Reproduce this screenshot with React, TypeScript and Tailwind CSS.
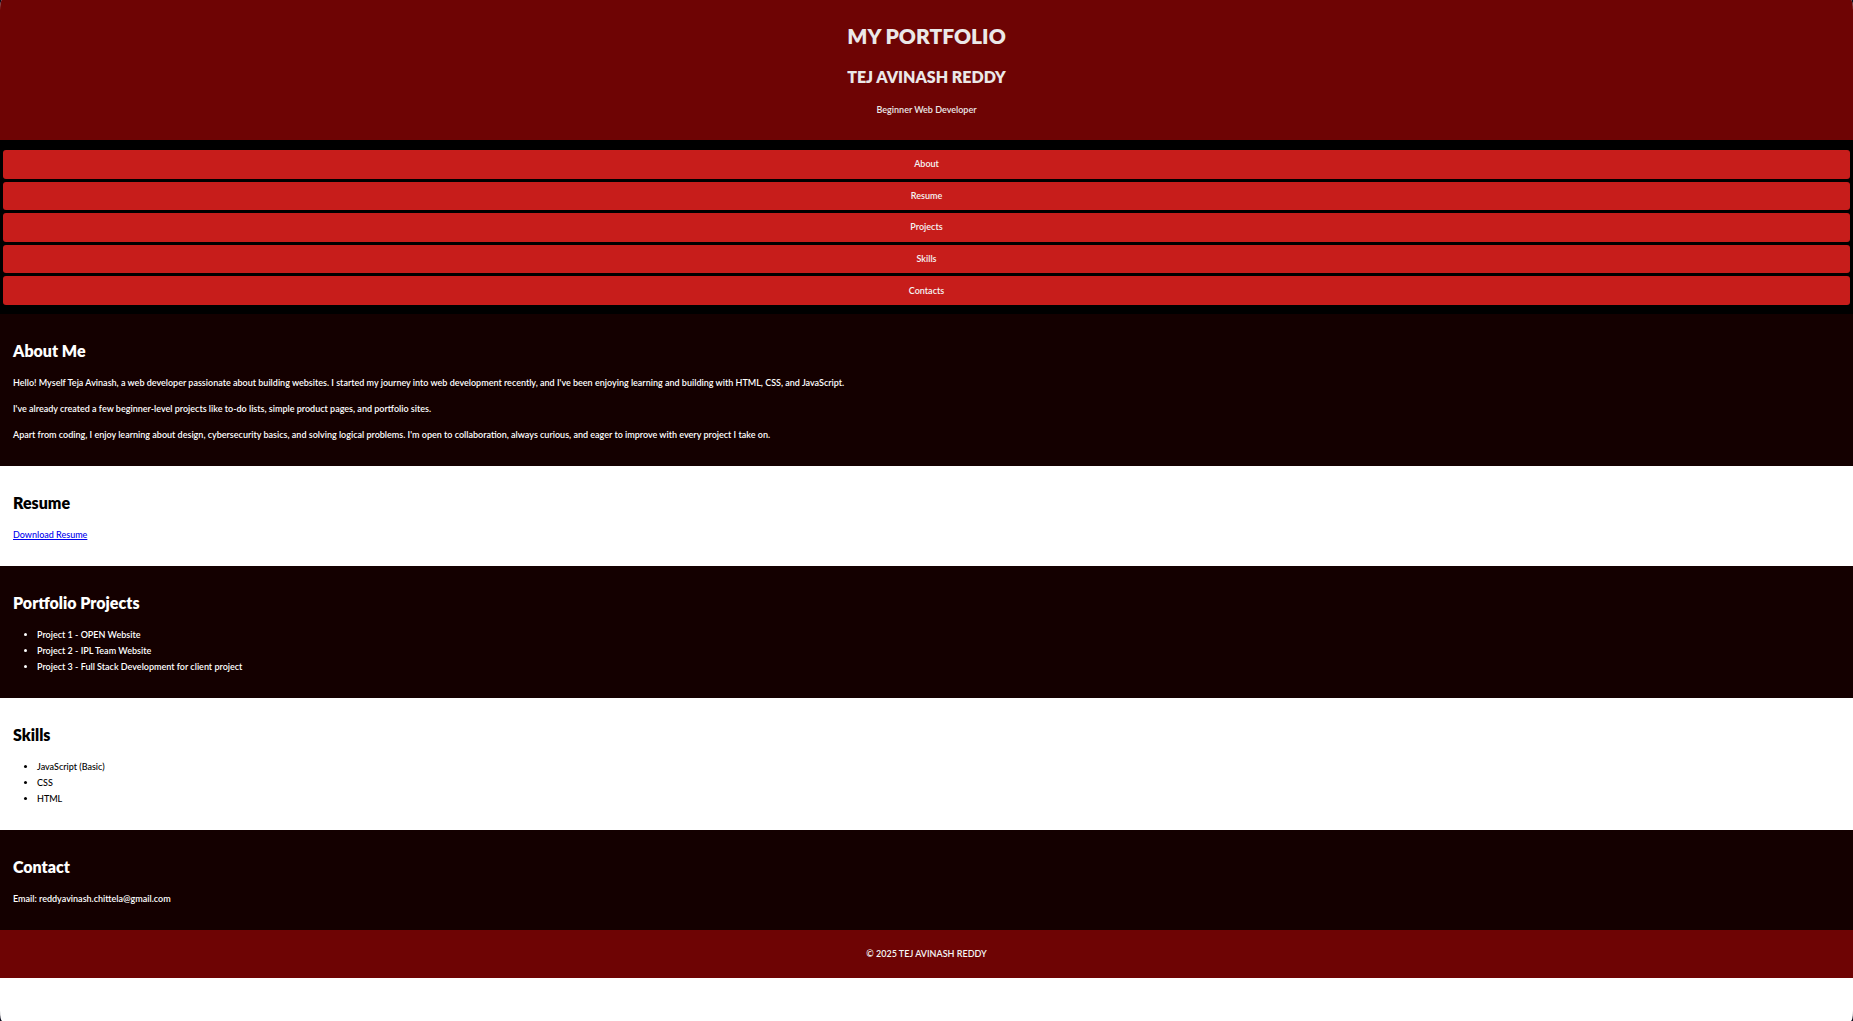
import type { ReactNode } from "react";

const links = [
  ["About", "#about"],
  ["Resume", "#resume"],
  ["Projects", "#projects"],
  ["Skills", "#skills"],
  ["Contacts", "#contact"],
];

function Section({ id, title, dark, children }: { id: string; title: string; dark?: boolean; children: ReactNode }) {
  return (
    <section
      id={id}
      className={
        dark
          ? "bg-[#140000] px-[13px] pt-[25px] pb-[13px] font-semibold text-white"
          : "bg-white px-[13px] pt-[25px] pb-[13px] font-medium text-black"
      }
    >
      <h2 className="mb-3 text-[16px] leading-6 font-extrabold">{title}</h2>
      {children}
    </section>
  );
}

function List({ items }: { items: string[] }) {
  return (
    <ul className="mb-[10px] list-disc pl-6">
      {items.map((item) => (
        <li key={item}>{item}</li>
      ))}
    </ul>
  );
}

export default function App() {
  return (
    <div className="min-h-screen bg-[#0b0b1c]">
      <div className="min-h-screen overflow-hidden rounded-[2px/10px] bg-white font-['Gill_Sans','Gill_Sans_MT',Lato,sans-serif] text-[9px] leading-4">
        <header className="bg-[#6e0404] px-3 pt-5 pb-[22px] text-center font-semibold text-[#ebe8e8]">
          <h1 className="mb-[13px] text-[21px] leading-8 font-extrabold">MY PORTFOLIO</h1>
          <h2 className="mb-[13px] text-[16px] leading-6 font-extrabold">TEJ AVINASH REDDY</h2>
          <p>Beginner Web Developer</p>
        </header>

        <nav className="bg-black px-[3px] pt-[10px] pb-[9px] font-semibold">
          <ul className="grid min-h-[155px] auto-rows-fr gap-[3px]">
            {links.map(([label, href]) => (
              <li key={label} className="flex">
                <a
                  href={href}
                  className="flex flex-1 items-center justify-center rounded-[3px] bg-[#c71d1b] text-[#f5f5f5]"
                >
                  {label}
                </a>
              </li>
            ))}
          </ul>
        </nav>

        <main>
          <Section id="about" title="About Me" dark>
            <p className="mb-[10px]">
              Hello! Myself Teja Avinash, a web developer passionate about building websites. I started my journey into
              web development recently, and I've been enjoying learning and building with HTML, CSS, and JavaScript.
            </p>
            <p className="mb-[10px]">
              I've already created a few beginner-level projects like to-do lists, simple product pages, and portfolio
              sites.
            </p>
            <p className="mb-[10px]">
              Apart from coding, I enjoy learning about design, cybersecurity basics, and solving logical problems. I'm
              open to collaboration, always curious, and eager to improve with every project I take on.
            </p>
          </Section>
          <Section id="resume" title="Resume">
            <p className="mb-[10px]">
              <a href="#resume" className="text-[#0000ee] underline">
                Download Resume
              </a>
            </p>
          </Section>
          <Section id="projects" title="Portfolio Projects" dark>
            <List
              items={[
                "Project 1 - OPEN Website",
                "Project 2 - IPL Team Website",
                "Project 3 - Full Stack Development for client project",
              ]}
            />
          </Section>
          <Section id="skills" title="Skills">
            <List items={["JavaScript (Basic)", "CSS", "HTML"]} />
          </Section>
          <Section id="contact" title="Contact" dark>
            <p className="mb-[10px]">Email: reddyavinash.chittela@gmail.com</p>
          </Section>
        </main>

        <footer className="bg-[#6e0404] px-3 py-4 text-center font-semibold text-[#f5f5f5]">
          <p>© 2025 TEJ AVINASH REDDY</p>
        </footer>
      </div>
    </div>
  );
}
